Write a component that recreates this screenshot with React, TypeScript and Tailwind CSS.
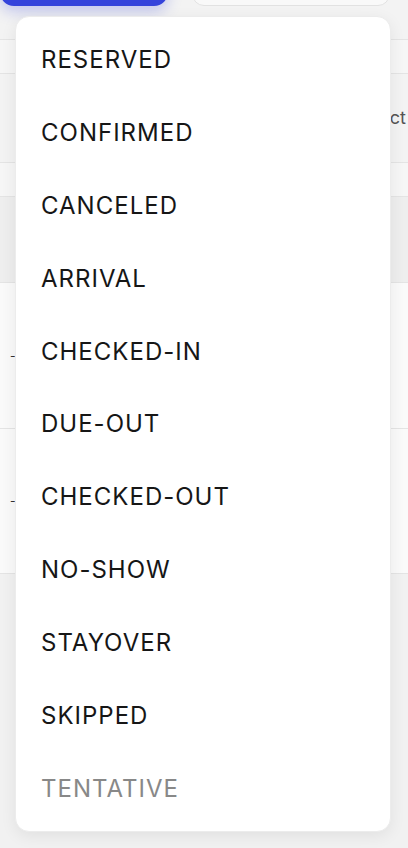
import React from "react";

const items = [
  "RESERVED",
  "CONFIRMED",
  "CANCELED",
  "ARRIVAL",
  "CHECKED-IN",
  "DUE-OUT",
  "CHECKED-OUT",
  "NO-SHOW",
  "STAYOVER",
  "SKIPPED",
];

export default function App() {
  return (
    <div
      className="relative w-[408px] h-[848px] overflow-hidden bg-[#f3f3f3]"
      style={{ fontFamily: "Inter, 'Noto Sans', sans-serif" }}
    >
      {/* background page */}
      <div className="flex flex-col">
        <div className="h-[39px] flex items-start">
          <div className="flex w-full gap-[24px] -mt-[30px]">
            <div className="w-[168px] h-[36px] rounded-br-[14px] rounded-bl-[14px] bg-[#3443db] shadow-[0_6px_14px_rgba(52,67,219,0.25)]" />
            <div className="w-[198px] h-[36px] rounded-[12px] border border-[#e2e2e2] bg-[#f9f9f9]" />
          </div>
        </div>
        <div className="h-[34px] bg-[#f6f6f6] border-t border-[#e4e4e4]" />
        <div className="h-[89px] bg-[#f3f3f3] border-t border-[#e4e4e4] flex items-center justify-end">
          <span className="text-[18px] leading-none text-[#555] mr-[2px]">ct</span>
        </div>
        <div className="h-[34px] bg-[#f6f6f6] border-t border-[#e4e4e4]" />
        <div className="h-[86px] bg-[#eeeeee] border-t border-[#e4e4e4]" />
        <div className="h-[146px] bg-[#fafafa] border-t border-[#e4e4e4] flex items-center">
          <span className="text-[12px] text-[#333] ml-[10px]">-</span>
        </div>
        <div className="h-[145px] bg-[#fafafa] border-t border-[#e4e4e4] flex items-center">
          <span className="text-[12px] text-[#333] ml-[10px]">-</span>
        </div>
        <div className="h-[280px] bg-[#f1f1f1] border-t border-[#e4e4e4]" />
      </div>

      {/* dropdown */}
      <div className="absolute left-[15px] top-[16px] w-[376px] h-[816px] rounded-[14px] bg-white border border-[#ececec] shadow-[0_4px_16px_rgba(0,0,0,0.07)] pt-[7px] pb-[6px] flex flex-col">
        {items.map((t) => (
          <div key={t} className="h-[73px] flex items-center pl-[25px] text-[24px] text-[#161616] tracking-[1px]">
            {t}
          </div>
        ))}
        <div className="h-[73px] flex items-center pl-[25px] text-[24px] text-[#888888] tracking-[1px]">
          TENTATIVE
        </div>
      </div>
    </div>
  );
}
